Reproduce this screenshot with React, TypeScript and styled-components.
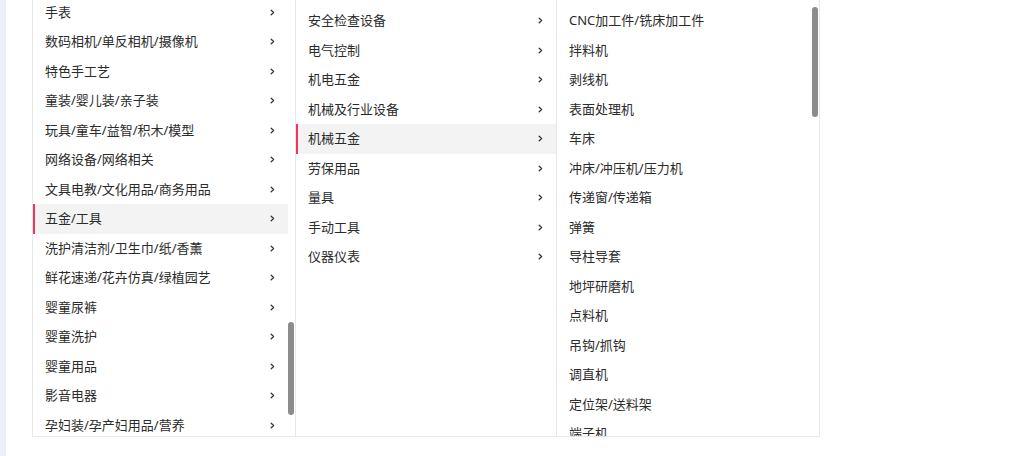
import React, { useLayoutEffect, useRef, useState } from 'react';
import styled, { createGlobalStyle } from 'styled-components';

const GlobalStyle = createGlobalStyle`
  html, body {
    margin: 0;
    padding: 0;
    background: #ffffff;
  }
  body {
    font-family: "Noto Sans", "Noto Sans CJK SC", sans-serif;
    color: #333333;
  }
`;

const firstLevel = [
  '女装/女士精品', '男装', '女鞋', '男鞋', '箱包皮具/热销女包/男包', '女士内衣/男士内衣/家居服',
  '服饰配件/皮带/帽子/围巾', '流行男鞋', '运动服/休闲服装', '运动鞋new', '运动/瑜伽/健身/球迷用品',
  '户外/登山/野营/旅行用品', '自行车/骑行装备/零配件', '电动车/配件/交通工具', '汽车/用品/配件/改装',
  '摩托车/装备/配件', '手机', '笔记本电脑', '平板电脑/MID', '电脑硬件/显示器/电脑周边', 'DIY电脑',
  '品牌台机/品牌一体机/服务器', '闪存卡/U盘/存储/移动硬盘', 'MP3/MP4/iPod/录音笔', '3C数码配件',
  '电玩/配件/游戏/攻略', '办公设备/耗材/相关服务', '大家电', '生活电器', '厨房电器',
  '个人护理/保健/按摩器材', '住宅家具', '商业/办公家具', '家装主材', '基础建材', '全屋定制',
  '电子元器件市场', '床上用品', '居家布艺', '家居饰品', '厨房/烹饪用具', '餐饮具', '收纳整理',
  '家庭/个人清洁工具', '居家日用', '彩妆/香水/美妆工具', '美容护肤/美体/精油', '美发护发/假发',
  '饰品/流行首饰/时尚饰品新', '珠宝/钻石/翡翠/黄金', 'ZIPPO/瑞士军刀/眼镜',
  '手表', '数码相机/单反相机/摄像机', '特色手工艺', '童装/婴儿装/亲子装', '玩具/童车/益智/积木/模型',
  '网络设备/网络相关', '文具电教/文化用品/商务用品', '五金/工具', '洗护清洁剂/卫生巾/纸/香薰',
  '鲜花速递/花卉仿真/绿植园艺', '婴童尿裤', '婴童洗护', '婴童用品', '影音电器', '孕妇装/孕产妇用品/营养',
  '奶粉/辅食/营养品/零食', '童鞋/婴儿鞋/亲子鞋', '宠物/宠物食品及用品',
];

const secondLevel = [
  '安全检查设备', '电气控制', '机电五金', '机械及行业设备', '机械五金', '劳保用品', '量具', '手动工具', '仪器仪表',
];

const thirdLevel = [
  'CNC加工件/铣床加工件', '拌料机', '剥线机', '表面处理机', '车床', '冲床/冲压机/压力机', '传递窗/传递箱',
  '弹簧', '导柱导套', '地坪研磨机', '点料机', '吊钩/抓钩', '调直机', '定位架/送料架', '端子机',
  '锻压机', '对焊机', '阀门', '废气处理设备', '分拣机', '粉碎机', '封口机', '覆膜机', '钢丝绳', '割草机',
  '工业风扇', '工业吸尘器', '焊接设备', '烘干设备', '滑轮', '环保设备', '混合机', '激光切割机', '夹具',
  '搅拌机', '空压机', '链条', '模具', '磨床', '喷涂设备', '起重机', '千斤顶', '切割机', '输送机', '水泵',
  '丝锥', '脱水机', '洗地机', '铣床', '线切割机', '压缩机', '液压机', '轴承', '钻床', '铸造设备',
  '注塑机', '自动化设备',
];

const Page = styled.div`
  display: flex;
  height: 456px;
`;

const SideStrip = styled.div`
  width: 6px;
  flex: none;
  background: #eef0f9;
`;

const Content = styled.div`
  flex: 1;
  padding-left: 26px;
`;

const Panel = styled.div`
  display: flex;
  width: max-content;
  height: 436px;
  border-left: 1px solid #e8e8e8;
  border-bottom: 1px solid #e8e8e8;
  background: #ffffff;
`;

const ColumnFrame = styled.div<{ $width: number }>`
  position: relative;
  width: ${p => p.$width}px;
  height: 100%;
  box-sizing: border-box;
  border-right: 1px solid #e8e8e8;
`;

const List = styled.ul<{ $gutter: boolean }>`
  list-style: none;
  margin: 0;
  padding: 6px ${p => (p.$gutter ? 7 : 0)}px 6px 0;
  height: 100%;
  box-sizing: border-box;
  overflow-y: auto;
  scrollbar-width: none;

  &::-webkit-scrollbar {
    display: none;
  }
`;

const Thumb = styled.div`
  position: absolute;
  right: 1px;
  width: 6px;
  border-radius: 3px;
  background: #8c8c8c;
`;

const Row = styled.li<{ $active?: boolean }>`
  position: relative;
  display: flex;
  align-items: center;
  justify-content: space-between;
  padding: 5px 13px 5px 12px;
  font-size: 13px;
  line-height: 19.5px;
  color: #2b2b2b;
  white-space: nowrap;
  background: ${p => (p.$active ? '#f3f3f3' : 'transparent')};
  cursor: pointer;

  &::before {
    content: '';
    display: ${p => (p.$active ? 'block' : 'none')};
    position: absolute;
    left: 0;
    top: 0;
    bottom: 0;
    width: 2px;
    background: #f5325c;
  }
`;

const Label = styled.span``;

const Chevron = () => (
  <svg width="5" height="7" viewBox="0 0 5 7" fill="none">
    <path d="M1.2 1.2 L3.6 3.5 L1.2 5.8" stroke="#333" strokeWidth="1.3" strokeLinecap="round" strokeLinejoin="round" />
  </svg>
);

type ColumnProps = {
  width: number;
  scrollTo?: number;
  trackOffset?: number;
  scrollbar?: boolean;
  children: React.ReactNode;
};

const ScrollColumn = ({ width, scrollTo = 0, trackOffset = 0, scrollbar = false, children }: ColumnProps) => {
  const listRef = useRef<HTMLUListElement>(null);
  const [thumb, setThumb] = useState<{ top: number; height: number } | null>(null);

  useLayoutEffect(() => {
    const el = listRef.current;
    if (!el) return;
    el.scrollTop = scrollTo;
    if (!scrollbar || el.scrollHeight <= el.clientHeight) return;
    const track = el.clientHeight - trackOffset;
    setThumb({
      top: trackOffset + (el.scrollTop / el.scrollHeight) * track,
      height: (el.clientHeight / el.scrollHeight) * track,
    });
  }, [scrollTo, trackOffset, scrollbar]);

  return (
    <ColumnFrame $width={width}>
      <List ref={listRef} $gutter={scrollbar}>{children}</List>
      {thumb && <Thumb style={{ top: thumb.top, height: thumb.height }} />}
    </ColumnFrame>
  );
};

export default function App() {
  return (
    <>
      <GlobalStyle />
      <Page>
        <SideStrip />
        <Content>
          <Panel>
            <ScrollColumn width={263} scrollTo={1513} scrollbar>
              {firstLevel.map(name => (
                <Row key={name} $active={name === '五金/工具'}>
                  <Label>{name}</Label>
                  <Chevron />
                </Row>
              ))}
            </ScrollColumn>
            <ScrollColumn width={261}>
              {secondLevel.map(name => (
                <Row key={name} $active={name === '机械五金'}>
                  <Label>{name}</Label>
                  <Chevron />
                </Row>
              ))}
            </ScrollColumn>
            <ScrollColumn width={263} trackOffset={7} scrollbar>
              {thirdLevel.map(name => (
                <Row key={name}>
                  <Label>{name}</Label>
                </Row>
              ))}
            </ScrollColumn>
          </Panel>
        </Content>
      </Page>
    </>
  );
}
